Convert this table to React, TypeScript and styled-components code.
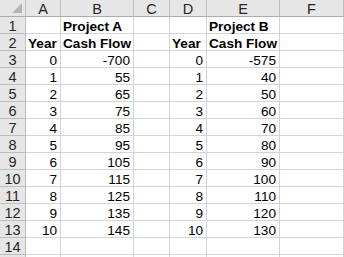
import styled, { createGlobalStyle } from 'styled-components'

const GlobalStyle = createGlobalStyle`
  html, body {
    margin: 0;
    padding: 0;
    background: #ffffff;
  }
`

const COLUMNS = ['A', 'B', 'C', 'D', 'E', 'F']
const COL_WIDTHS = [26, 35, 73, 36, 37, 73, 64]

type Align = 'left' | 'right' | 'center'
type CellData = { text?: string; bold?: boolean; align?: Align }

const t = (text: string, bold = false, align: Align = 'left'): CellData => ({ text, bold, align })
const n = (v: number): CellData => ({ text: String(v), align: 'right' })

const cashA = [-700, 55, 65, 75, 85, 95, 105, 115, 125, 135, 145]
const cashB = [-575, 40, 50, 60, 70, 80, 90, 100, 110, 120, 130]

const rows: CellData[][] = [
  [{}, t('Project A', true), {}, {}, t('Project B', true), {}],
  [t('Year', true), t('Cash Flow', true), {}, t('Year', true), t('Cash Flow', true), {}],
  ...cashA.map((v, i) => [n(i), n(v), {}, n(i), n(cashB[i]), {}]),
  [{}, {}, {}, {}, {}, {}],
]

const Sheet = styled.div`
  display: grid;
  grid-template-columns: ${COL_WIDTHS.map(w => `${w}px`).join(' ')};
  grid-auto-rows: 17px;
  font-family: Arial, 'Liberation Sans', sans-serif;
  font-size: 13.6px;
  color: #000;
  width: 344px;
  height: 257px;
  overflow: hidden;
`

const HeaderCell = styled.div<{ $bottom?: boolean }>`
  box-sizing: border-box;
  background: #e6e6e6;
  border-right: 1px solid #bdbdbd;
  border-bottom: 1px solid ${p => (p.$bottom ? '#ababab' : '#bdbdbd')};
  color: #262626;
  text-align: center;
  font-size: 14.5px;
  padding-top: 1px;
  line-height: 16px;
  position: relative;
`

const Corner = styled(HeaderCell)`
  &::after {
    content: '';
    position: absolute;
    right: 3px;
    bottom: 3px;
    width: 0;
    height: 0;
    border-left: 10px solid transparent;
    border-bottom: 10px solid #b5b5b5;
  }
`

const Cell = styled.div<{ $bold?: boolean; $align?: Align }>`
  box-sizing: border-box;
  border-right: 1px solid #d4d4d4;
  border-bottom: 1px solid #d4d4d4;
  font-weight: ${p => (p.$bold ? 700 : 400)};
  text-align: ${p => p.$align || 'left'};
  padding: 2px 3px 0 2px;
  line-height: 16px;
  white-space: nowrap;
`

export default function App() {
  return (
    <>
      <GlobalStyle />
      <Sheet>
        <Corner $bottom />
        {COLUMNS.map(c => (
          <HeaderCell key={c} $bottom>
            {c}
          </HeaderCell>
        ))}
        {rows.map((row, r) => (
          <RowCells key={r} index={r + 1} row={row} />
        ))}
        {/* row 15 only peeks in at the bottom edge */}
        <HeaderCell />
        {COLUMNS.map(c => (
          <Cell key={c} />
        ))}
      </Sheet>
    </>
  )
}

const RowCells = ({ index, row }: { index: number; row: CellData[] }) => (
  <>
    <HeaderCell>{index}</HeaderCell>
    {row.map((cell, c) => (
      <Cell key={c} $bold={cell.bold} $align={cell.align}>
        {cell.text}
      </Cell>
    ))}
  </>
)
